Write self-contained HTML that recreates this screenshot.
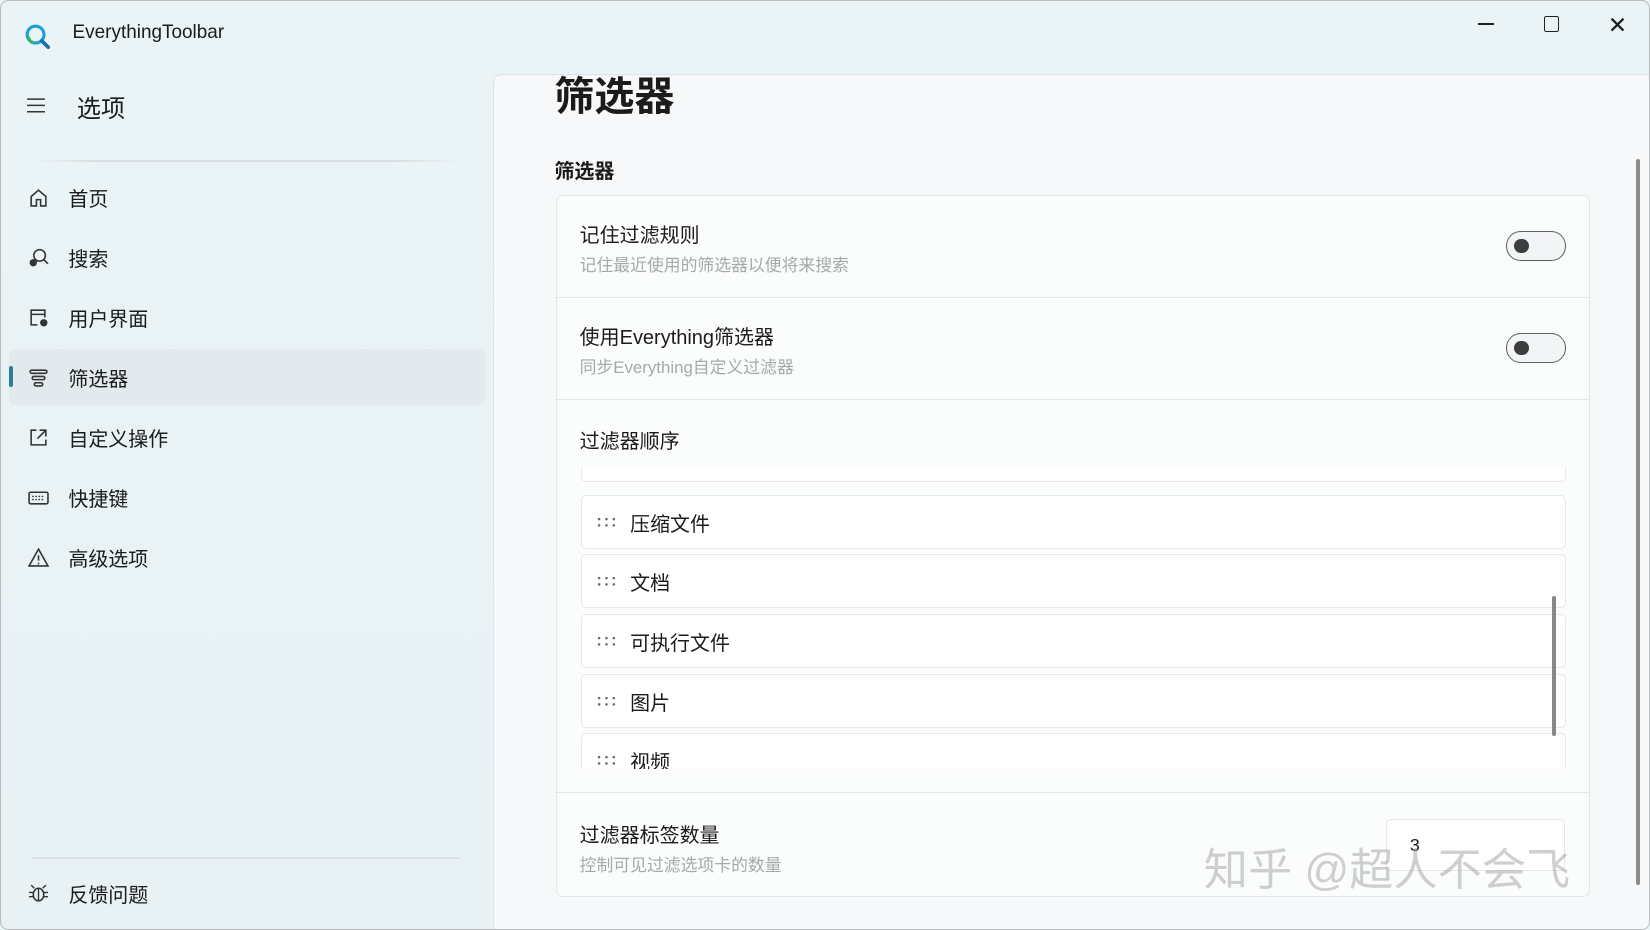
<!DOCTYPE html>
<html><head><meta charset="utf-8"><style>
*{box-sizing:border-box;margin:0;padding:0}
html,body{width:1650px;height:930px;overflow:hidden}
body{font-family:"Liberation Sans","Noto Sans CJK SC",sans-serif;color:#1b1b1b;background:#e9f3f6}
#w{width:1568px;height:884px;position:relative;zoom:1.05230;background:linear-gradient(180deg,#eaf4f7,#e8f2f5);border:1px solid #b8bcbf;border-radius:8px;overflow:hidden}
.a{position:absolute}
.nav{position:absolute;left:8px;width:452px;height:53px;display:flex;align-items:center;font-size:19px}
.nav svg{position:absolute;left:18px}
.nav span{position:absolute;left:56px}
#panel{left:468px;top:69px;width:1110px;height:830px;background:#f6f8f9;border:1px solid #dde3e6;border-radius:8px 0 0 0}
.card{position:absolute;left:58px;width:983px;background:#fbfcfc;border:1px solid #e3e6e8}
.t{font-size:19px;color:#1b1b1b}
.s{font-size:16px;color:#a6a9ab;margin-top:3px}
.tog{position:absolute;right:22px;width:57px;height:28px;border:1.5px solid #5c5f61;border-radius:14px;background:#f3f4f5}
.tog:after{content:"";position:absolute;left:7px;top:6px;width:14px;height:14px;border-radius:50%;background:#3b3d3f}
.item{position:absolute;left:23px;width:936px;height:51px;background:#fff;border:1px solid #e6e8ea;border-radius:5px;font-size:19px;display:flex;align-items:center}
.item svg{margin:0 13px 0 15px}
</style></head><body><div id="w">
<svg class="a" style="left:22px;top:21px" width="26" height="26" viewBox="0 0 26 26"><circle cx="11" cy="11" r="8" fill="none" stroke="#1e9fd0" stroke-width="3"/><path d="M17 17l6 6" stroke="#1a6fb0" stroke-width="3.5" stroke-linecap="round"/><path d="M4 13a8 8 0 0 0 5 6" stroke="#35b56a" stroke-width="3" fill="none"/></svg>
<div class="a" style="left:68px;top:20px;font-size:18px">EverythingToolbar</div>
<div class="a" style="left:1404px;top:21px;width:15px;height:1.5px;background:#222"></div>
<div class="a" style="left:1466px;top:14px;width:15px;height:15px;border:1.5px solid #222;border-radius:2px"></div>
<div class="a" style="left:1527px;top:10px;font-size:22px;font-weight:300">✕</div>
<svg class="a" style="left:24px;top:91px" width="20" height="16"><path d="M1 2h17M1 8h17M1 14h17" stroke="#333" stroke-width="1.4"/></svg>
<div class="a" style="left:72px;top:84px;font-size:23px">选项</div>
<div class="a" style="left:30px;top:151px;width:405px;height:2px;background:linear-gradient(90deg,transparent,#d7dee1 15%,#d7dee1 85%,transparent)"></div>
<div class="nav" style="top:160px"><svg width="20" height="20" viewBox="0 0 20 20"><path d="M3 9l7-6 7 6v9h-5v-6H8v6H3z" fill="none" stroke="#333" stroke-width="1.5"/></svg><span>首页</span></div>
<div class="nav" style="top:217px"><svg width="20" height="20" viewBox="0 0 20 20"><circle cx="11" cy="8" r="5.5" fill="none" stroke="#333" stroke-width="1.5"/><path d="M15 12l4 4" stroke="#333" stroke-width="1.5"/><circle cx="5" cy="15" r="3.5" fill="#333"/></svg><span>搜索</span></div>
<div class="nav" style="top:274px"><svg width="20" height="20" viewBox="0 0 20 20"><path d="M9 17H3V3h13v7M3 7h13" fill="none" stroke="#333" stroke-width="1.5"/><circle cx="15" cy="15" r="3.5" fill="#333"/></svg><span>用户界面</span></div>
<div class="nav" style="top:331px;background:#e3eaed;border-radius:5px"><div class="a" style="left:0;top:16px;width:3px;height:20px;background:#2f7f8f;border-radius:2px"></div><svg width="20" height="20" viewBox="0 0 20 20"><rect x="2" y="3" width="16" height="3" rx="1.5" fill="none" stroke="#333" stroke-width="1.5"/><rect x="4" y="9" width="12" height="3" rx="1.5" fill="none" stroke="#333" stroke-width="1.5"/><rect x="6" y="15" width="8" height="3" rx="1.5" fill="none" stroke="#333" stroke-width="1.5"/></svg><span>筛选器</span></div>
<div class="nav" style="top:388px"><svg width="20" height="20" viewBox="0 0 20 20"><path d="M8 3H3v14h14v-5M11 3h6v6M17 3l-8 8" fill="none" stroke="#333" stroke-width="1.5"/></svg><span>自定义操作</span></div>
<div class="nav" style="top:445px"><svg width="20" height="20" viewBox="0 0 20 20"><rect x="1" y="5" width="18" height="11" rx="1.5" fill="none" stroke="#333" stroke-width="1.5"/><path d="M4 9h12M4 12h12" stroke="#333" stroke-width="1.3" stroke-dasharray="1.5 1.5"/></svg><span>快捷键</span></div>
<div class="nav" style="top:502px"><svg width="20" height="20" viewBox="0 0 20 20"><path d="M10 2L1 18h18z" fill="none" stroke="#333" stroke-width="1.5"/><path d="M10 8v5M10 15v1.5" stroke="#333" stroke-width="1.5"/></svg><span>高级选项</span></div>
<div class="a" style="left:30px;top:813px;width:405px;height:2px;background:#dbe2e5"></div>
<div class="nav" style="top:822px"><svg width="20" height="20" viewBox="0 0 20 20"><ellipse cx="10" cy="11" rx="5" ry="6" fill="none" stroke="#333" stroke-width="1.5"/><path d="M5 9H1M5 13H1M15 9h4M15 13h4M6 5L3 2M14 5l3-3M10 5v12" stroke="#333" stroke-width="1.3"/></svg><span>反馈问题</span></div>
<div id="panel" class="a">
<div class="a" style="left:57px;top:-10px;font-size:38px;font-weight:bold">筛选器</div>
<div class="a" style="left:57px;top:76px;font-size:19px;font-weight:bold">筛选器</div>
<div class="card" style="top:114px;height:98px;border-radius:7px 7px 0 0;padding:22px 22px"><div class="t">记住过滤规则</div><div class="s">记住最近使用的筛选器以便将来搜索</div><div class="tog" style="top:34px"></div></div>
<div class="card" style="top:211px;height:98px;padding:22px 22px"><div class="t">使用Everything筛选器</div><div class="s">同步Everything自定义过滤器</div><div class="tog" style="top:34px"></div></div>
<div class="card" style="top:308px;height:375px;overflow:hidden"><div class="a t" style="left:22px;top:24px">过滤器顺序</div>
<div class="a" style="left:0;top:64px;width:983px;height:287px;overflow:hidden">
<div class="item" style="top:-37px"></div>
<div class="item" style="top:27px"><svg width="18" height="10"><g fill="#666"><circle cx="2" cy="2" r="1.2"/><circle cx="9" cy="2" r="1.2"/><circle cx="16" cy="2" r="1.2"/><circle cx="2" cy="8" r="1.2"/><circle cx="9" cy="8" r="1.2"/><circle cx="16" cy="8" r="1.2"/></g></svg>压缩文件</div>
<div class="item" style="top:83px"><svg width="18" height="10"><g fill="#666"><circle cx="2" cy="2" r="1.2"/><circle cx="9" cy="2" r="1.2"/><circle cx="16" cy="2" r="1.2"/><circle cx="2" cy="8" r="1.2"/><circle cx="9" cy="8" r="1.2"/><circle cx="16" cy="8" r="1.2"/></g></svg>文档</div>
<div class="item" style="top:140px"><svg width="18" height="10"><g fill="#666"><circle cx="2" cy="2" r="1.2"/><circle cx="9" cy="2" r="1.2"/><circle cx="16" cy="2" r="1.2"/><circle cx="2" cy="8" r="1.2"/><circle cx="9" cy="8" r="1.2"/><circle cx="16" cy="8" r="1.2"/></g></svg>可执行文件</div>
<div class="item" style="top:197px"><svg width="18" height="10"><g fill="#666"><circle cx="2" cy="2" r="1.2"/><circle cx="9" cy="2" r="1.2"/><circle cx="16" cy="2" r="1.2"/><circle cx="2" cy="8" r="1.2"/><circle cx="9" cy="8" r="1.2"/><circle cx="16" cy="8" r="1.2"/></g></svg>图片</div>
<div class="item" style="top:253px"><svg width="18" height="10"><g fill="#666"><circle cx="2" cy="2" r="1.2"/><circle cx="9" cy="2" r="1.2"/><circle cx="16" cy="2" r="1.2"/><circle cx="2" cy="8" r="1.2"/><circle cx="9" cy="8" r="1.2"/><circle cx="16" cy="8" r="1.2"/></g></svg>视频</div>
</div>
<div class="a" style="left:946px;top:187px;width:4px;height:133px;background:#888;border-radius:2px"></div>
</div>
<div class="card" style="top:682px;height:100px;border-radius:0 0 7px 7px;padding:24px 22px"><div class="t">过滤器标签数量</div><div class="s">控制可见过滤选项卡的数量</div><div class="a" style="left:788px;top:24px;width:170px;height:50px;border:1px solid #e3e6e8;border-radius:5px;background:#fff;padding:15px 22px;font-size:17px">3</div></div>
<div class="a" style="left:1085px;top:80px;width:4px;height:690px;background:#8a8a8a;border-radius:2px"></div>
</div>
<div class="a" style="left:1143px;top:792px;font-size:42px;color:rgba(160,160,160,.5)">知乎 @超人不会飞</div>
</div></body></html>
